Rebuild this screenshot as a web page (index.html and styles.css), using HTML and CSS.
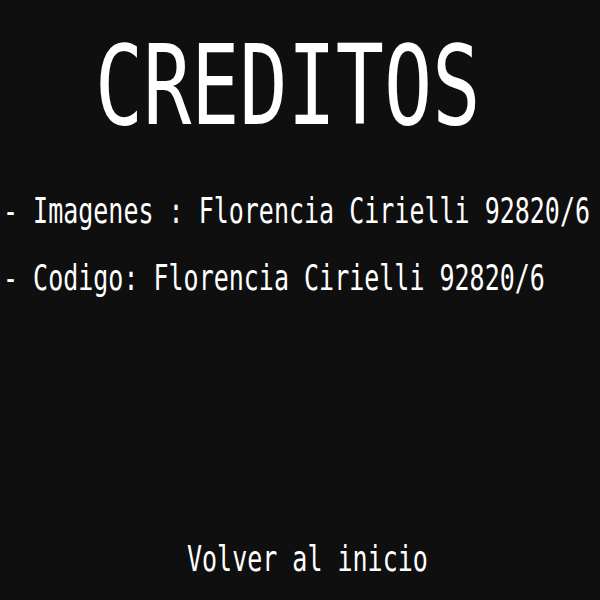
FILE: index.html
```html
<!DOCTYPE html>
<html lang="es">
<head>
<meta charset="utf-8">
<title>Creditos</title>
<link rel="stylesheet" href="styles.css">
</head>
<body>
<main class="screen">
  <h1 class="title"><span class="stretch">CREDITOS</span></h1>
  <p class="line line-first"><span class="stretch">- Imagenes : Florencia Cirielli 92820/6</span></p>
  <p class="line line-second"><span class="stretch">- Codigo: Florencia Cirielli 92820/6</span></p>
  <a class="back" href="#"><span class="stretch">Volver al inicio</span></a>
</main>
</body>
</html>
```

FILE: styles.css
```css
html, body {
  margin: 0;
  padding: 0;
  background: #0f0f0f;
}
body {
  width: 600px;
  height: 600px;
  overflow: hidden;
  color: #ffffff;
  font-family: "DejaVu Sans Mono", monospace;
}
.screen {
  display: flex;
  flex-direction: column;
  align-items: flex-start;
}
.stretch {
  display: inline-block;
  white-space: pre;
}
.title {
  margin: 47px 0 0 0;
  padding-left: 95px;
  font-size: 80px;
  line-height: 80px;
  font-weight: normal;
}
.title .stretch {
  transform: scaleY(1.37);
}
.line, .back {
  margin: 0;
  font-size: 25px;
  line-height: 25px;
  height: 25px;
  color: #ffffff;
  text-decoration: none;
}
.line .stretch, .back .stretch {
  transform: scaleY(1.43);
}
.line {
  padding-left: 3px;
}
.line-first {
  margin-top: 71px;
}
.line-second {
  margin-top: 42px;
}
.back {
  margin-top: 256px;
  padding-left: 187px;
}
```
